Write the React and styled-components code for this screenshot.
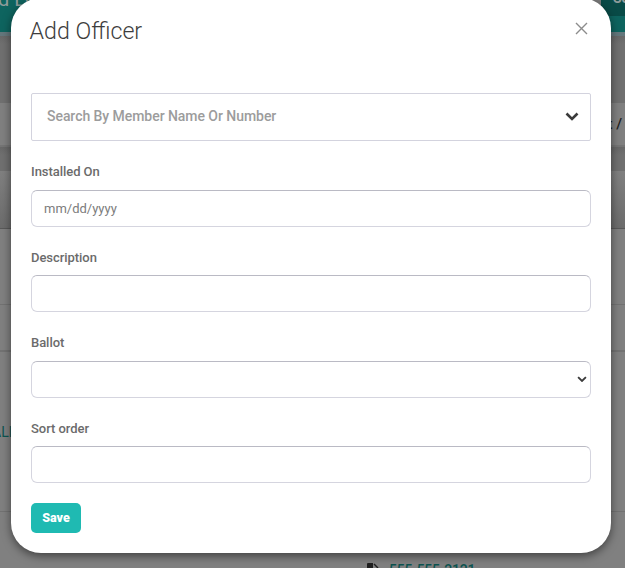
import styled, { createGlobalStyle } from 'styled-components'

const GlobalStyle = createGlobalStyle`
  * {
    box-sizing: border-box;
  }
  body {
    margin: 0;
    overflow: hidden;
    font-family: Roboto, "Liberation Sans", sans-serif;
  }
`

const Screen = styled.div`
  position: relative;
  width: 625px;
  height: 568px;
  overflow: hidden;
  background: #808080;
`

const TopBar = styled.header`
  display: flex;
  justify-content: space-between;
  height: 36px;
  background: #0e645f;
  border-bottom: 4px solid #64777c;
`

const Brand = styled.span`
  margin: -13px 0 0 -2px;
  color: #8f9c9b;
  font-size: 20px;
  line-height: 24px;
  white-space: nowrap;
`

const TopActions = styled.div`
  display: flex;
`

const SearchBox = styled.div`
  width: 60px;
  height: 16px;
  background: #7b7b7b;
`

const TopButton = styled.div`
  width: 24px;
  height: 16px;
  padding-left: 12px;
  overflow: hidden;
  background: #094b47;
  color: #8f9c9b;
  font-size: 14px;
  font-weight: 700;
  line-height: 16px;

  span {
    display: block;
    margin-top: -10px;
  }
`

const Band = styled.div`
  height: ${({ $height }) => $height}px;
  background: linear-gradient(#686868, #707070 8px);
`

const Crumbs = styled.div`
  display: flex;
  justify-content: flex-end;
  height: 44px;
  padding-right: 3px;
  border-bottom: 2px solid #757575;
  background: #808080;
  color: #1f1f1f;
  font-size: 15px;
  font-weight: 500;
  line-height: 43px;
  white-space: pre;
`

const PanelHead = styled.div`
  height: 58px;
  border-bottom: 1px solid #595959;
  background: linear-gradient(#808080, #6c6c6c);
`

const Row = styled.div`
  height: ${({ $height }) => $height}px;
  border-bottom: ${({ $line = 1 }) => $line}px solid #727272;
  color: #0c5450;
  font-size: 14px;
`

const MemberName = styled.div`
  padding-top: 72px;
  margin-left: -8px;
  line-height: 16px;
`

const Phone = styled.div`
  display: flex;
  gap: 10px;
  padding: 50px 0 0 367px;
  color: #0c5450;
  font-size: 14px;
  font-weight: 500;
  line-height: 16px;
  letter-spacing: -0.25px;

  svg {
    margin-top: 1px;
  }
`

const Modal = styled.section`
  position: absolute;
  top: -2px;
  left: 11px;
  width: 600px;
  height: 555px;
  padding: 18px 20px 0;
  border-radius: 30px;
  background: #fff;
  box-shadow: 0 3px 10px rgba(0, 0, 0, 0.5);
`

const ModalHeader = styled.div`
  display: flex;
  justify-content: space-between;
  height: 77px;
`

const Title = styled.h2`
  margin: 0 0 0 -1.4px;
  color: #3d3d3d;
  font-size: 23.2px;
  font-weight: 300;
  line-height: 30px;
`

const Close = styled.button`
  width: 13px;
  height: 13px;
  margin: 6px 3px 0 0;
  padding: 0;
  border: 0;
  background: none;

  svg {
    display: block;
  }
`

const MemberSearch = styled.div`
  display: flex;
  align-items: center;
  justify-content: space-between;
  height: 48px;
  padding: 0 11px 1px 15px;
  border: 1px solid #d3d3de;
  border-radius: 2px;
  color: #9c9c9c;
  font-size: 14px;
  font-weight: 500;
  line-height: 16px;
  letter-spacing: -0.05px;

  span {
    margin-top: -1px;
  }
`

const Field = styled.div`
  height: 85.36px;
  padding-top: 22.49px;
`

const Label = styled.label`
  display: block;
  height: 26.51px;
  color: #6b6b6b;
  font-size: 13px;
  font-weight: 500;
  line-height: 18px;
  letter-spacing: -0.05px;
`

const Control = styled.div`
  display: flex;
  align-items: center;
  justify-content: space-between;
  height: 37px;
  padding: 1px 3px 0 12px;
  border: 1px solid #d5d5df;
  border-top-color: #babac4;
  border-radius: 6px;
  color: #7c7c7c;
  font-size: 13px;
  line-height: 18px;

  svg {
    margin: -1px 0 0 auto;
  }
`

const SaveButton = styled.button`
  display: block;
  width: 50px;
  height: 30px;
  margin-top: 20.5px;
  padding: 0;
  border: 0;
  border-radius: 5px;
  background: #1fbab2;
  color: #fff;
  font-family: inherit;
  font-size: 12.5px;
  font-weight: 900;
  line-height: 30px;
`

function Chevron({ width, height, stroke }) {
  return (
    <svg width={width} height={height} viewBox="0 0 14 9" fill="none">
      <path d="M1.5 1.5 7 7l5.5-5.5" stroke="#3b3b3b" strokeWidth={stroke} />
    </svg>
  )
}

function FormField({ label, children }) {
  return (
    <Field>
      <Label>{label}</Label>
      <Control>{children}</Control>
    </Field>
  )
}

export default function App() {
  return (
    <>
      <GlobalStyle />
      <Screen>
        <TopBar>
          <Brand>d Lo</Brand>
          <TopActions>
            <SearchBox />
            <TopButton><span>Se</span></TopButton>
          </TopActions>
        </TopBar>
        <Band $height={67} />
        <Crumbs>t /</Crumbs>
        <Band $height={24} />
        <PanelHead />
        <Row $height={76} />
        <Row $height={47} $line={2} />
        <Row $height={160}>
          <MemberName>ALL</MemberName>
        </Row>
        <Phone>
          <svg width="12" height="14" viewBox="0 0 12 14">
            <path d="M1 0h5v5h5v9H1Q0 14 0 13V1Q0 0 1 0z" fill="#1f1f1f" />
            <path d="M7 1l4 4" stroke="#1f1f1f" strokeWidth="1.4" />
          </svg>
          555-555-2121
        </Phone>

        <Modal>
          <ModalHeader>
            <Title>Add Officer</Title>
            <Close aria-label="Close">
              <svg width="13" height="13" viewBox="0 0 13 13">
                <path d="M1 1l11 11M12 1L1 12" stroke="#8c8c8c" strokeWidth="1.4" />
              </svg>
            </Close>
          </ModalHeader>
          <MemberSearch>
            <span>Search By Member Name Or Number</span>
            <Chevron width={14} height={9} stroke={2.6} />
          </MemberSearch>
          <FormField label="Installed On">mm/dd/yyyy</FormField>
          <FormField label="Description" />
          <FormField label="Ballot">
            <Chevron width={10} height={6.4} stroke={2.6} />
          </FormField>
          <FormField label="Sort order" />
          <SaveButton>Save</SaveButton>
        </Modal>
      </Screen>
    </>
  )
}
